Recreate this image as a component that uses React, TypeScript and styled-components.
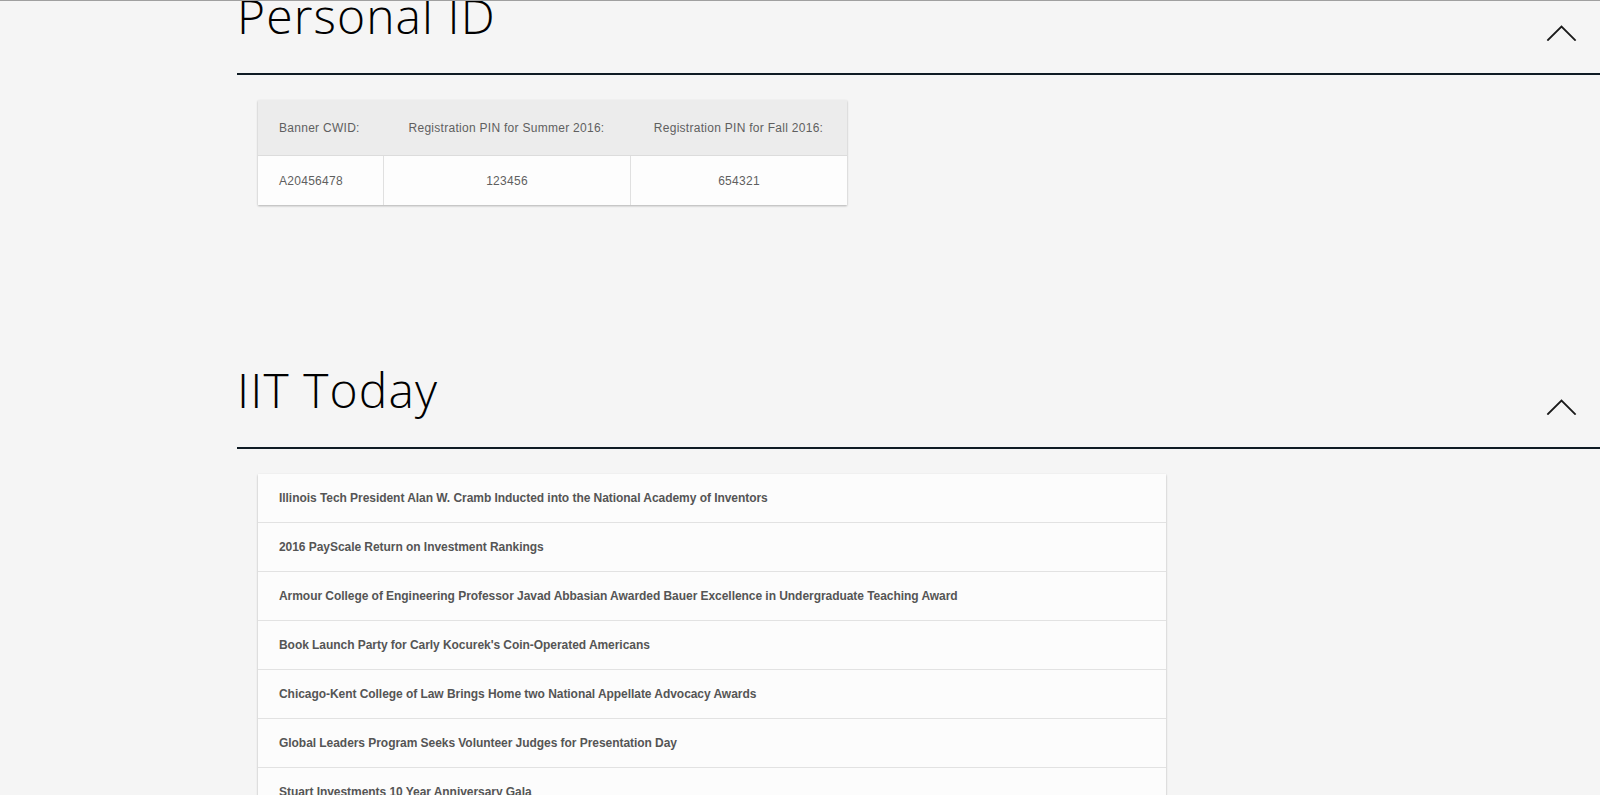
import React from "react";
import styled, { createGlobalStyle } from "styled-components";

const GlobalStyle = createGlobalStyle`
  html, body {
    margin: 0;
    padding: 0;
    overflow: hidden;
    background: #f5f5f5;
  }
  body {
    border-top: 1px solid #a0a0a0;
    font-family: "Liberation Sans", Arial, sans-serif;
  }
`;

const Page = styled.main`
  display: flex;
  flex-direction: column;
  padding-left: 237px;
  margin-top: -9px;
`;

const Section = styled.section<{ $gapBelow?: number }>`
  display: flex;
  flex-direction: column;
  margin-bottom: ${(p) => p.$gapBelow ?? 0}px;
`;

const Header = styled.header`
  display: flex;
  align-items: flex-end;
  justify-content: space-between;
  padding-bottom: 33px;
  border-bottom: 2px solid #0f1b24;
`;

const Title = styled.h2`
  margin: 0;
  font-family: "Open Sans", "Lato", sans-serif;
  font-weight: 300;
  font-size: 48px;
  line-height: 48px;
  color: #000;
  letter-spacing: 1.1px;
`;

const Toggle = styled.button`
  display: flex;
  padding: 0;
  margin: 0 23px -1px 0;
  border: none;
  background: none;
  cursor: pointer;
  color: #1a1a1a;
`;

const Body = styled.div`
  display: flex;
  padding: 25px 0 0 21px;
`;

const Table = styled.div`
  display: grid;
  grid-template-columns: 125px 247px 217px;
  background: #fdfdfd;
  box-shadow: 0 1px 2px rgba(0, 0, 0, 0.28);
`;

const HeadCell = styled.div<{ $center?: boolean }>`
  height: 56px;
  display: flex;
  align-items: center;
  justify-content: ${(p) => (p.$center ? "center" : "flex-start")};
  padding-left: ${(p) => (p.$center ? 0 : 21)}px;
  background: #ececec;
  border-bottom: 1px solid #dcdcdc;
  font-size: 12px;
  letter-spacing: 0.28px;
  color: #5f5f5f;
  box-sizing: border-box;
`;

const DataCell = styled.div<{ $center?: boolean; $divider?: boolean }>`
  height: 49px;
  display: flex;
  align-items: center;
  justify-content: ${(p) => (p.$center ? "center" : "flex-start")};
  padding-left: ${(p) => (p.$center ? 0 : 21)}px;
  border-left: ${(p) => (p.$divider ? "1px solid #e0e0e0" : "none")};
  font-size: 12px;
  letter-spacing: 0.28px;
  color: #5f5f5f;
  box-sizing: border-box;
`;

const NewsList = styled.ul`
  list-style: none;
  margin: 0;
  padding: 0;
  width: 908px;
  background: #fcfcfc;
  box-shadow: 0 1px 2px rgba(0, 0, 0, 0.28);
`;

const NewsItem = styled.li`
  height: 49px;
  box-sizing: border-box;
  display: flex;
  align-items: center;
  padding-left: 21px;
  border-bottom: 1px solid #e2e2e2;
  font-size: 12px;
  font-weight: 700;
  color: #555;
  letter-spacing: -0.05px;
`;

const Chevron = () => (
  <svg width="31" height="17" viewBox="0 0 31 17" fill="none">
    <polyline
      points="2,16 15.5,2.5 29,16"
      stroke="currentColor"
      strokeWidth="1.8"
      strokeLinecap="square"
    />
  </svg>
);

const news = [
  "Illinois Tech President Alan W. Cramb Inducted into the National Academy of Inventors",
  "2016 PayScale Return on Investment Rankings",
  "Armour College of Engineering Professor Javad Abbasian Awarded Bauer Excellence in Undergraduate Teaching Award",
  "Book Launch Party for Carly Kocurek's Coin-Operated Americans",
  "Chicago-Kent College of Law Brings Home two National Appellate Advocacy Awards",
  "Global Leaders Program Seeks Volunteer Judges for Presentation Day",
  "Stuart Investments 10 Year Anniversary Gala",
  "Career Fair for Computing and Engineering Students",
];

export default function App() {
  return (
    <>
      <GlobalStyle />
      <Page>
        <Section $gapBelow={161}>
          <Header>
            <Title>Personal ID</Title>
            <Toggle aria-label="Collapse">
              <Chevron />
            </Toggle>
          </Header>
          <Body>
            <Table>
              <HeadCell>Banner CWID:</HeadCell>
              <HeadCell $center>Registration PIN for Summer 2016:</HeadCell>
              <HeadCell $center>Registration PIN for Fall 2016:</HeadCell>
              <DataCell>A20456478</DataCell>
              <DataCell $center $divider>123456</DataCell>
              <DataCell $center $divider>654321</DataCell>
            </Table>
          </Body>
        </Section>
        <Section>
          <Header>
            <Title>IIT Today</Title>
            <Toggle aria-label="Collapse">
              <Chevron />
            </Toggle>
          </Header>
          <Body>
            <NewsList>
              {news.map((n) => (
                <NewsItem key={n}>{n}</NewsItem>
              ))}
            </NewsList>
          </Body>
        </Section>
      </Page>
    </>
  );
}
